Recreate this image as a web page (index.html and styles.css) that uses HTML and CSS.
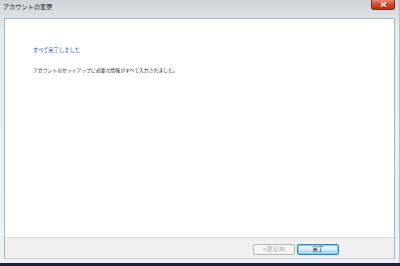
FILE: index.html
```html
<!DOCTYPE html>
<html lang="ja">
<head>
  <meta charset="UTF-8">
  <title>アカウントの変更</title>
  <link rel="stylesheet" href="styles.css">
</head>
<body>

  <div class="window">
    <!-- Barra de título -->
    <div class="titlebar">
      <span class="title">アカウントの変更</span>
      <span class="close">
        <svg width="7" height="5" viewBox="0 0 7 5">
          <path d="M1 0.5 L6 4.5 M6 0.5 L1 4.5" stroke="#fff" stroke-width="1.2"/>
        </svg>
      </span>
    </div>

    <div class="client">
      <div class="content">
        <h1 class="heading">すべて完了しました</h1>
        <p class="message">アカウントのセットアップに必要な情報がすべて入力されました。</p>
      </div>
      <div class="footer">
        <button class="btn" disabled>&lt; 戻る(B)</button>
        <button class="btn btn-default">完了</button>
      </div>
    </div>
  </div>

  <div class="desktop"></div>

</body>
</html>
```

FILE: styles.css
```css
/* Colores del marco */
:root {
  --frame-top: #cdd3d9;
  --frame-bottom: #e7ebef;
  --heading-color: #1c4cb0;
  --text-color: #2a2a2a;
  --panel-color: #f0f0f0;
}

body {
  margin: 0;
  padding: 0;
  width: 400px;
  height: 266px;
  overflow: hidden;
  background-color: #1b2432;
  font-family: "Noto Sans CJK JP", "Noto Sans", sans-serif;
}

/* Ventana */
.window {
  width: 400px;
  height: 263px;
  box-sizing: border-box;
  padding: 0 4px 4px 4px;
  display: flex;
  flex-direction: column;
  background: linear-gradient(to bottom, var(--frame-top) 0, var(--frame-bottom) 30px, #eef1f4 100%);
  border-right: 1px solid #b9c0c7;
}

.titlebar {
  height: 18px;
  display: flex;
  align-items: flex-start;
  flex-shrink: 0;
}

.title {
  flex: 1;
  font-size: 6.2px;
  line-height: 14px;
  color: #111;
  margin-left: -1px;
}

.close {
  width: 22px;
  height: 9px;
  display: flex;
  justify-content: center;
  align-items: center;
  background: linear-gradient(to bottom, #e58a76 0, #d0462c 50%, #bd2f18 100%);
  border: 1px solid #7d2d20;
  border-top: none;
  border-radius: 0 0 3px 3px;
}

/* Área de cliente */
.client {
  flex: 1;
  display: flex;
  flex-direction: column;
  border: 1px solid #a9b1b9;
  border-bottom-color: #c8cdd2;
}

.content {
  flex: 1;
  background-color: #fff;
  padding: 27px 28px 0 28px;
}

.heading {
  margin: 0;
  font-size: 5.3px;
  font-weight: normal;
  line-height: 8px;
  color: var(--heading-color);
}

.message {
  margin: 12px 0 0 0;
  font-size: 4.85px;
  line-height: 8px;
  color: var(--text-color);
}

/* Panel inferior con botones */
.footer {
  height: 21px;
  box-sizing: border-box;
  border-top: 1px solid #dfdfdf;
  background-color: var(--panel-color);
  display: flex;
  justify-content: flex-end;
  align-items: flex-start;
  gap: 2px;
  padding: 6px 55px 0 0;
}

.btn {
  width: 42px;
  height: 11px;
  padding: 0;
  margin: 0;
  font-family: inherit;
  font-size: 5.4px;
  line-height: 9px;
  border: 1px solid #707070;
  border-radius: 2px;
  background: linear-gradient(to bottom, #f2f2f2 0, #ebebeb 50%, #dddddd 51%, #cfcfcf 100%);
  color: #000;
}

.btn:disabled {
  border-color: #b5b5b5;
  background: #f4f4f4;
  color: #9a9a9a;
}

.btn-default {
  border-color: #3c7fb1;
  box-shadow: inset 0 0 0 1px #7fd0f5;
  background: linear-gradient(to bottom, #eaf6fd 0, #d9f0fc 50%, #bee6fd 51%, #a7d9f5 100%);
}

.desktop {
  height: 3px;
}
```
